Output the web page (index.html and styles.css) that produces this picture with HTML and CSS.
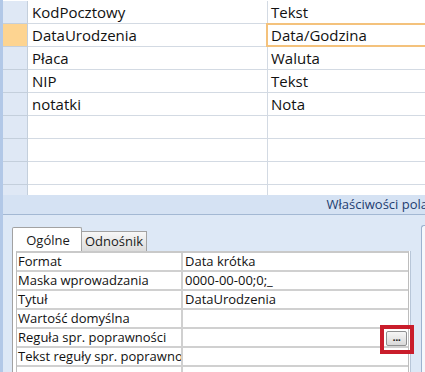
FILE: index.html
```html
<!DOCTYPE html>
<html lang="pl">
<head>
<meta charset="utf-8">
<title>Projekt tabeli</title>
<link rel="stylesheet" href="styles.css">
</head>
<body>
<div class="app">
  <div class="design">
    <div class="row"><div class="sel"></div><div class="name">KodPocztowy</div><div class="type">Tekst</div></div>
    <div class="row current"><div class="sel"></div><div class="name">DataUrodzenia</div><div class="type">Data/Godzina</div></div>
    <div class="row"><div class="sel"></div><div class="name">Płaca</div><div class="type">Waluta</div></div>
    <div class="row"><div class="sel"></div><div class="name">NIP</div><div class="type">Tekst</div></div>
    <div class="row"><div class="sel"></div><div class="name">notatki</div><div class="type">Nota</div></div>
    <div class="row"><div class="sel"></div><div class="name"></div><div class="type"></div></div>
    <div class="row"><div class="sel"></div><div class="name"></div><div class="type"></div></div>
    <div class="row"><div class="sel"></div><div class="name"></div><div class="type"></div></div>
    <div class="row"><div class="sel"></div><div class="name"></div><div class="type"></div></div>
  </div>
  <div class="props-title"><span>Właściwości pola</span></div>
  <div class="props">
    <div class="tabset">
      <div class="tabs">
        <div class="tab active">Ogólne</div>
        <div class="tab">Odnośnik</div>
      </div>
      <div class="tab-body">
        <div class="pgrid">
          <div class="prow"><div class="pname">Format</div><div class="pval">Data krótka</div></div>
          <div class="prow"><div class="pname">Maska wprowadzania</div><div class="pval">0000-00-00;0;_</div></div>
          <div class="prow"><div class="pname">Tytuł</div><div class="pval">DataUrodzenia</div></div>
          <div class="prow"><div class="pname">Wartość domyślna</div><div class="pval"></div></div>
          <div class="prow"><div class="pname">Reguła spr. poprawności</div><div class="pval btncell"><span class="ellipsis">...</span></div></div>
          <div class="prow"><div class="pname">Tekst reguły spr. poprawności</div><div class="pval"></div></div>
          <div class="prow"><div class="pname"></div><div class="pval"></div></div>
        </div>
      </div>
    </div>
    <div class="side"></div>
  </div>
</div>
</body>
</html>
```
FILE: styles.css
```css
html, body {
  margin: 0;
  padding: 0;
}
body {
  width: 425px;
  height: 372px;
  overflow: hidden;
  font-family: "Open Sans", "Noto Sans", "Liberation Sans", sans-serif;
  color: #111;
  background: #dde8f6;
}
.app {
  height: 372px;
  border-left: 3px solid #b2c8e7;
  display: flex;
  flex-direction: column;
  overflow: hidden;
  background: #dde8f6;
}

/* ---------- design grid ---------- */
.design {
  height: 195px;
  flex: none;
  overflow: hidden;
  background: #fff;
  padding-top: 1px;
  box-sizing: border-box;
}
.row {
  display: grid;
  grid-template-columns: 25px 240px 1fr;
  height: 23px;
}
.row > div {
  box-sizing: border-box;
  border-bottom: 1px solid #d3dae3;
  font-size: 15px;
  line-height: 22px;
  white-space: nowrap;
}
.sel {
  background: #dfe8f5;
  border-right: 1px solid #c4cfdc;
}
.row > .sel {
  border-bottom-color: #c4cfdc;
}
.name {
  border-right: 1px solid #d3dae3;
  padding-left: 4px;
}
.type {
  padding-left: 3px;
}
.current .sel {
  background: #fdd491;
}
.current .type {
  position: relative;
}
.current .type::after {
  content: "";
  position: absolute;
  left: -2px;
  top: -1px;
  right: -4px;
  bottom: -1px;
  border: 2px solid #f4c27c;
}

/* ---------- properties header ---------- */
.props-title {
  flex: none;
  height: 20px;
  box-sizing: border-box;
  background: #d5e2f3;
  border-bottom: 1px solid #a3b8d3;
  text-align: right;
  white-space: nowrap;
  font-size: 13px;
  line-height: 19px;
  color: #1e3d70;
  overflow: hidden;
}
.props-title span {
  margin-right: -3px;
}

/* ---------- properties body ---------- */
.props {
  flex: 1;
  display: flex;
  padding: 12px 0 0 9px;
  min-height: 0;
}
.tabset {
  width: 399px;
  flex: none;
  display: flex;
  flex-direction: column;
}
.tabs {
  display: flex;
  align-items: flex-end;
  height: 24px;
  flex: none;
}
.tab {
  box-sizing: border-box;
  height: 20px;
  width: 65px;
  border: 1px solid #a2a2a2;
  border-left: none;
  border-bottom: none;
  background: linear-gradient(#f7f7f7, #dcdcdc);
  font-size: 13px;
  line-height: 19px;
  text-align: center;
  color: #1a1a1a;
}
.tab.active {
  height: 24px;
  width: 70px;
  border-left: 1px solid #a2a2a2;
  border-top-left-radius: 2px;
  border-top-right-radius: 2px;
  background: #fff;
  line-height: 24px;
  padding-left: 2px;
}
.tab-body {
  flex: 1;
  background: #fff;
  border-left: 1px solid #a2a2a2;
  border-right: 1px solid #b8c6d8;
  padding: 0 1px 0 3px;
}
.pgrid {
  border-top: 2px solid #c9c9c9;
  border-left: 1px solid #bdbdbd;
  border-right: 1px solid #bdbdbd;
}
.prow {
  display: grid;
  grid-template-columns: 166px 1fr;
  height: 19px;
  box-sizing: border-box;
  border-bottom: 2px solid #d0d0d0;
  font-size: 13px;
  line-height: 17px;
}
.pname {
  border-right: 2px solid #d0d0d0;
  padding-left: 1px;
  overflow: hidden;
  white-space: nowrap;
}
.pval {
  padding-left: 2px;
  white-space: nowrap;
}
.btncell {
  display: flex;
  justify-content: flex-end;
  align-items: flex-start;
}
.ellipsis {
  position: relative;
  box-sizing: border-box;
  width: 21px;
  height: 15px;
  margin: 2px 1px 0 0;
  border: 1px solid #8f9091;
  border-radius: 2px;
  background: linear-gradient(#f6f6f6, #d9d9d9);
  font-size: 11px;
  font-weight: bold;
  line-height: 9px;
  text-align: center;
  letter-spacing: -0.5px;
  color: #222;
}
.ellipsis::after {
  content: "";
  position: absolute;
  left: -7px;
  top: -7px;
  right: -8px;
  bottom: -9px;
  border: 4px solid #c91d2b;
}

.side {
  flex: 1;
  margin: -2px 0 0 10px;
  background: #f5f8fc;
  border-left: 1px solid #9cb2cf;
  border-top: 1px solid #9cb2cf;
  border-top-left-radius: 3px;
}
```
